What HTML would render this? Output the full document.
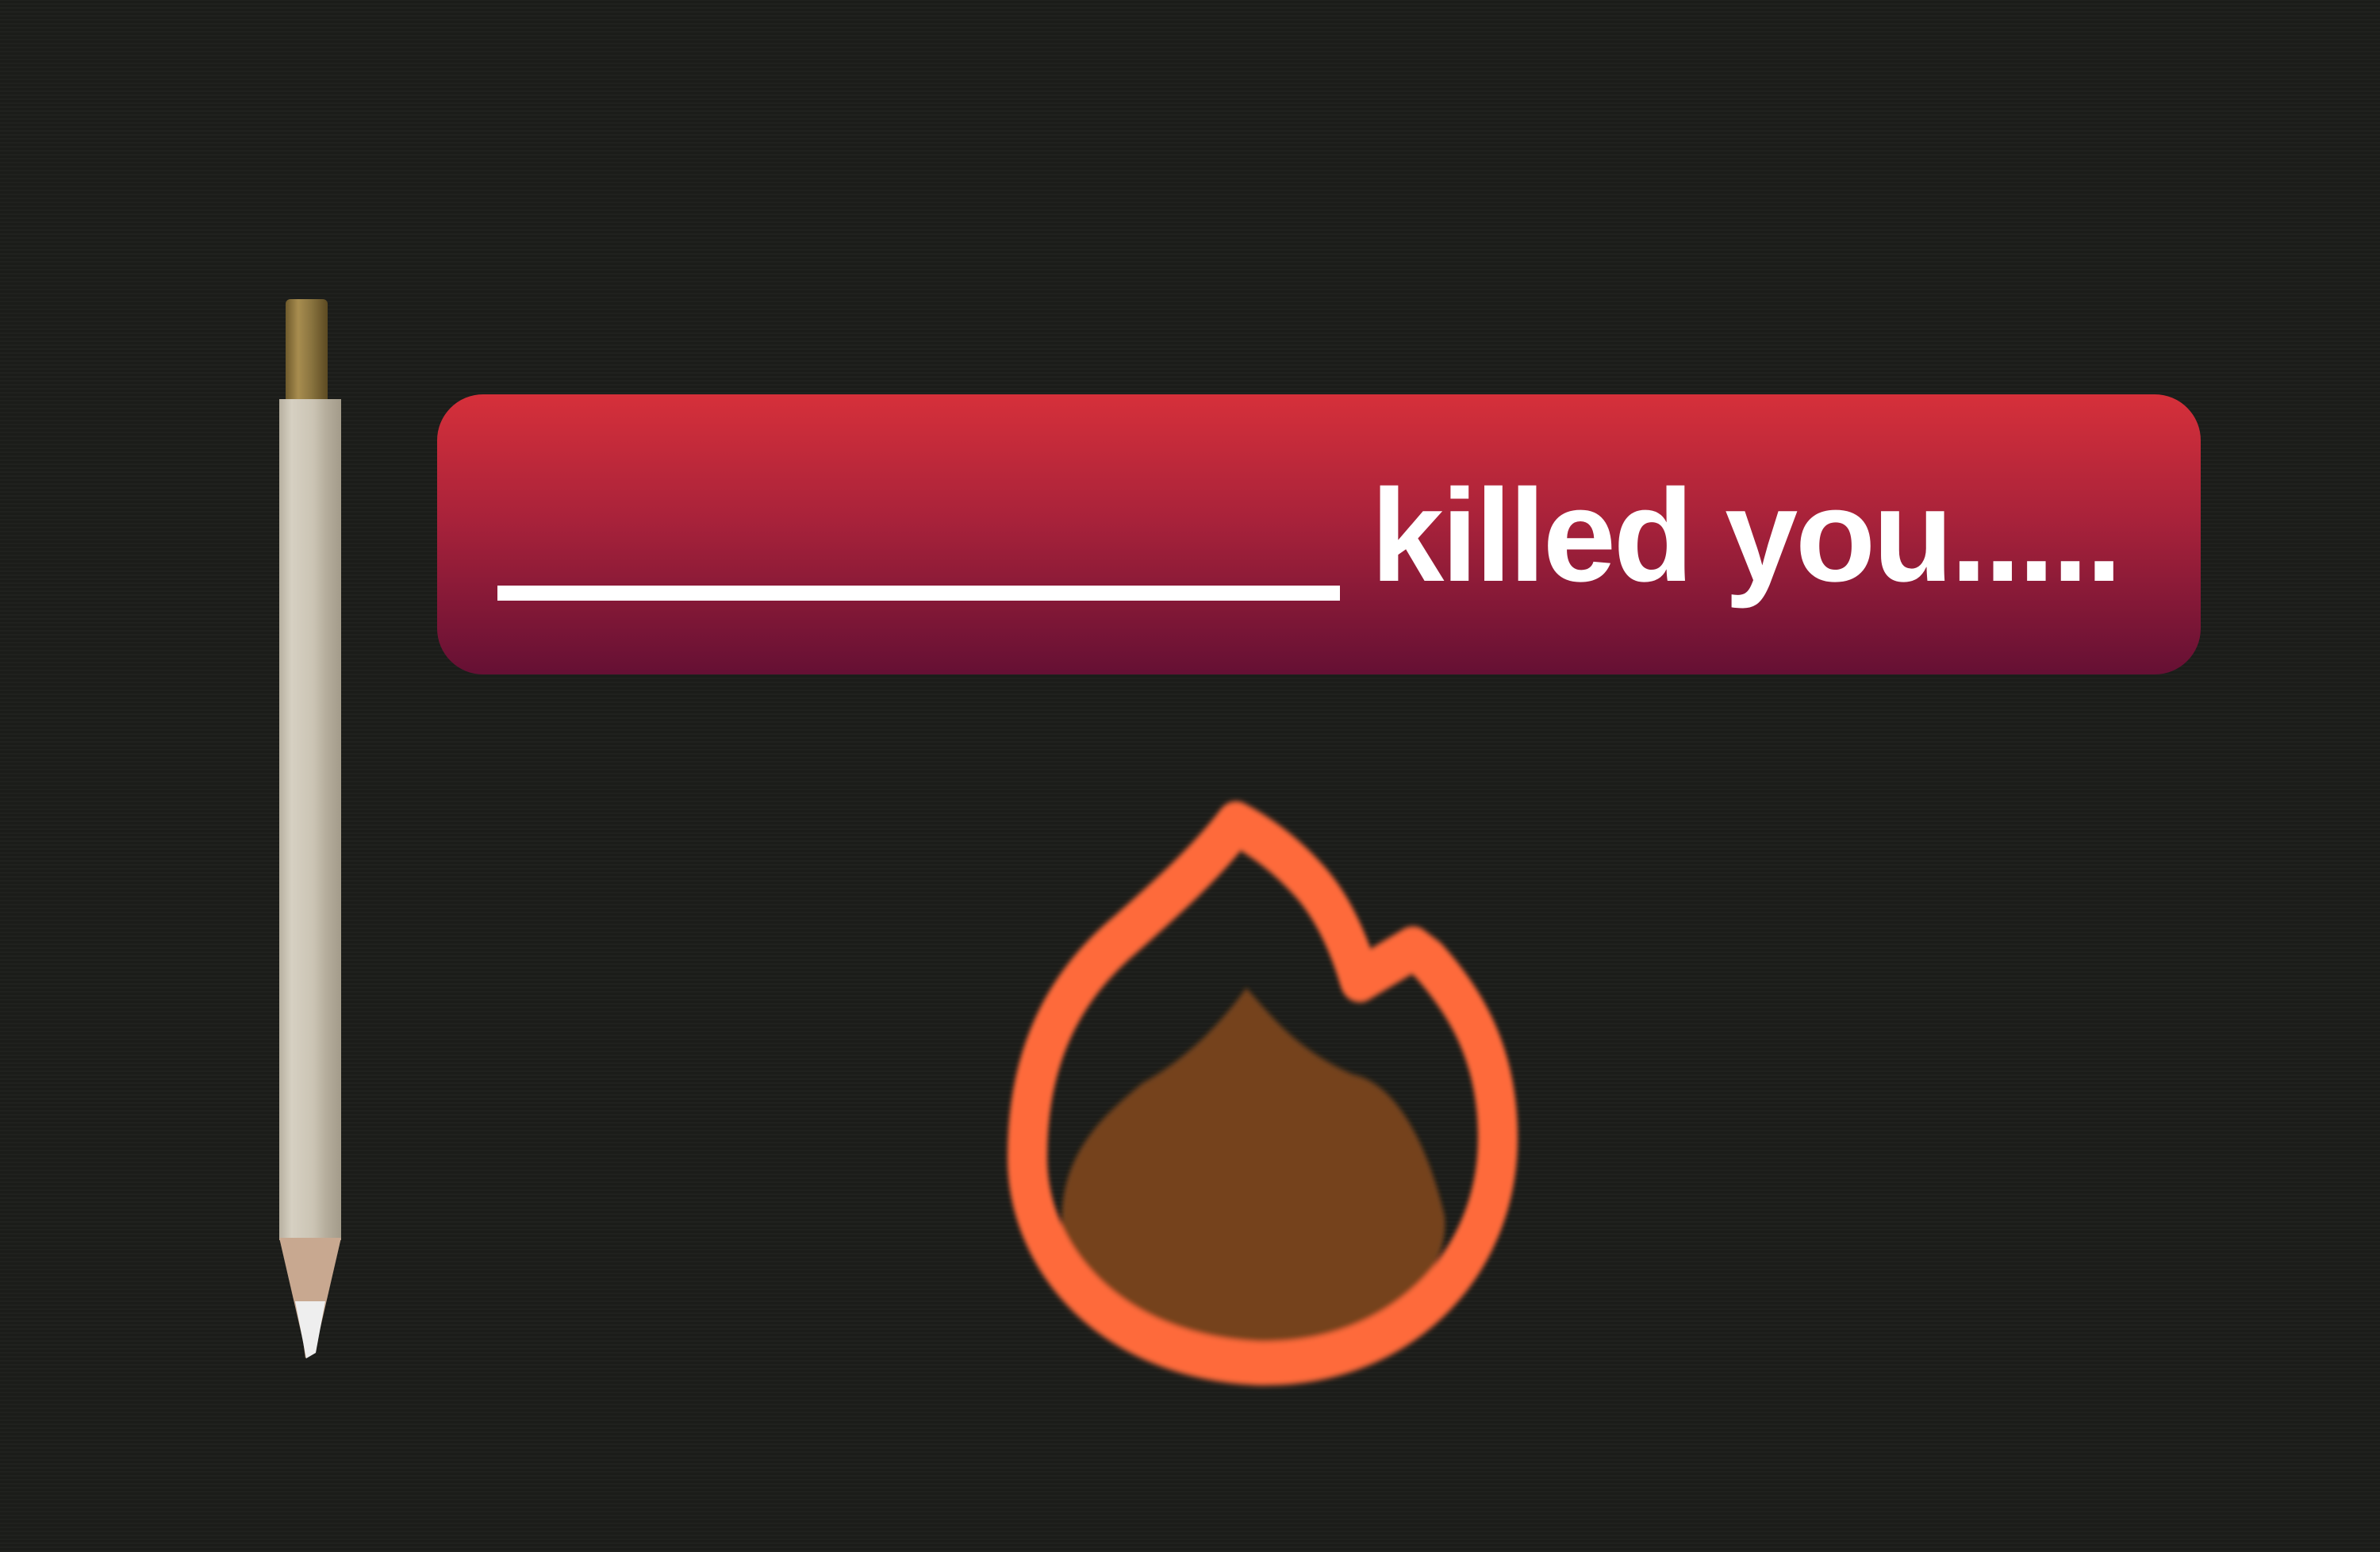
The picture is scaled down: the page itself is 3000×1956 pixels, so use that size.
<!DOCTYPE html>
<html><head><style>
html,body{margin:0;padding:0;}
body{width:3000px;height:1956px;background:#1c1d1a;position:relative;overflow:hidden;font-family:"Liberation Sans",sans-serif;}
.bg{position:absolute;inset:0;background:repeating-linear-gradient(0deg,rgba(255,255,255,0.018) 0 2px,rgba(0,0,0,0.03) 2px 5px);}
.banner{position:absolute;left:551px;top:497px;width:2223px;height:353px;border-radius:58px;background:linear-gradient(#d6303a,#a8223a 45%,#651034);}
.line{position:absolute;left:627px;top:738px;width:1062px;height:19px;background:#fff;}
.txt{position:absolute;left:1728px;top:593px;font-size:166px;font-weight:bold;color:#fff;letter-spacing:-3.5px;line-height:1;white-space:nowrap;}
.brass{position:absolute;left:360px;top:377px;width:53px;height:128px;background:linear-gradient(90deg,#6e5a2c,#a88d4f 30%,#8b7540 60%,#5c4a22);border-radius:6px 6px 0 0;}
.body{position:absolute;left:352px;top:503px;width:78px;height:1060px;background:linear-gradient(90deg,#b7b0a0,#d6d0c2 20%,#cbc4b4 55%,#b6ae9d 75%,#a39b8a);}
</style></head><body>
<div class="bg"></div>
<div class="brass"></div>
<div class="body"></div>
<svg style="position:absolute;left:0;top:0" width="3000" height="1956">
<polygon points="352,1560 430,1560 400,1690 385,1712 382,1690" fill="#c8a890"/>
<polygon points="372,1640 410,1640 398,1705 386,1712" fill="#eee"/>
<defs><filter id="b"><feGaussianBlur stdDeviation="3"/></filter></defs>
<g filter="url(#b)" transform="translate(0,1010) scale(1,1.11) translate(0,-1010)">
<path d="M1571,1222 C1600,1250 1630,1290 1705,1320 C1760,1330 1800,1400 1821,1481 C1830,1560 1720,1630 1585,1630 C1440,1630 1330,1570 1339,1472 C1345,1400 1400,1360 1440,1330 C1500,1300 1540,1260 1571,1222 Z" fill="#74431f"/>
<path d="M1558,1035 C1520,1080 1470,1120 1420,1160 C1340,1220 1295,1300 1295,1414 C1295,1530 1400,1640 1585,1648 C1760,1652 1888,1540 1888,1392 C1888,1300 1850,1240 1800,1190 L1781,1177 L1714,1213 C1700,1170 1680,1130 1650,1100 C1620,1070 1590,1050 1558,1035 Z" fill="none" stroke="#fe6b3b" stroke-width="50" stroke-linejoin="round"/>
</g>
</svg>
<div class="banner"></div>
<div class="line"></div>
<div class="txt">killed you.....</div>
</body></html>
